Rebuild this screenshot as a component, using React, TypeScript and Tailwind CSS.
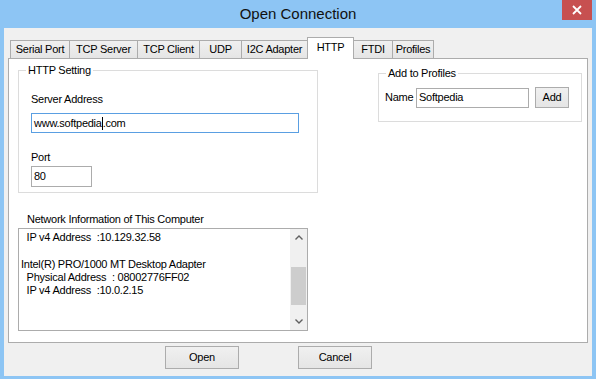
import React from 'react';

const tabs = [
  { label: 'Serial Port', w: 'w-[60px]' },
  { label: 'TCP Server', w: 'w-[69px]' },
  { label: 'TCP Client', w: 'w-[63px]' },
  { label: 'UDP', w: 'w-[43px]' },
  { label: 'I2C Adapter', w: 'w-[67px]' },
  { label: 'HTTP', w: 'w-[47px]', active: true },
  { label: 'FTDI', w: 'w-[40px]' },
  { label: 'Profiles', w: 'w-[42px]' },
];

const netLines = [
  '  IP v4 Address  :10.129.32.58',
  '',
  'Intel(R) PRO/1000 MT Desktop Adapter',
  '  Physical Address  : 08002776FF02',
  '  IP v4 Address  :10.0.2.15',
];

function Chevron({ up }: { up?: boolean }) {
  return (
    <svg width="8" height="5" viewBox="0 0 8 5">
      <polyline
        points={up ? '0.5,4.5 4,1 7.5,4.5' : '0.5,0.5 4,4 7.5,0.5'}
        fill="none"
        stroke="#606060"
        strokeWidth="1.4"
      />
    </svg>
  );
}

function WinButton({ children, className }: { children: React.ReactNode; className?: string }) {
  return (
    <button
      type="button"
      className={`flex items-center justify-center border border-[#acacac] bg-gradient-to-b from-[#f0f0f0] to-[#e5e5e5] text-black ${className ?? ''}`}
    >
      {children}
    </button>
  );
}

export default function App() {
  return (
    <div className="flex h-[379px] w-[596px] flex-col bg-[#8dc5f4] font-['Liberation_Sans',Arial,sans-serif] text-[11px] tracking-[-0.25px] text-black">
      {/* title bar */}
      <div className="relative flex h-[28px] shrink-0 items-center justify-center">
        <span className="text-[15px] tracking-normal text-[#111]">Open Connection</span>
        <div className="absolute right-[4px] top-0 flex h-[20px] w-[30px] items-center justify-center bg-[#c75050]">
          <svg width="10" height="10" viewBox="0 0 10 10">
            <path d="M1 1 L9 9 M9 1 L1 9" stroke="white" strokeWidth="1.8" />
          </svg>
        </div>
      </div>

      {/* client area */}
      <div className="mx-[4px] mb-[3px] flex flex-1 flex-col bg-[#f0f0f0]">
        {/* tab strip */}
        <div className="mt-[9px] flex h-[21px] items-end pl-[6px]">
          {tabs.map((t, i) =>
            t.active ? (
              <div
                key={t.label}
                className={`relative z-10 -mb-px -ml-px flex h-[22px] items-center justify-center border border-b-0 border-[#acacac] bg-white pb-[3px] ${t.w}`}
              >
                {t.label}
              </div>
            ) : (
              <div
                key={t.label}
                className={`flex h-[18px] items-center justify-center border border-b-0 border-[#acacac] bg-gradient-to-b from-[#f0f0f0] to-[#e5e5e5] ${i > 0 ? '-ml-px' : ''} ${t.w}`}
              >
                {t.label}
              </div>
            )
          )}
        </div>

        {/* tab page */}
        <div className="ml-[4px] flex h-[285px] w-[580px] flex-col border border-[#acacac] bg-white">
          <div className="flex items-start">
            {/* HTTP Setting */}
            <fieldset className="ml-[9px] mt-[5px] h-[129px] w-[300px] border border-[#dcdcdc]">
              <legend className="ml-[7px] px-[2px] leading-[13px]">HTTP Setting</legend>
              <div className="flex flex-col items-start px-[12px]">
                <span className="mt-[16px] leading-[13px]">Server Address</span>
                <div className="mt-[7px] flex h-[20px] w-[268px] items-center border border-[#5a9fe2] pl-[2px]">
                  <span>www.softpedia</span>
                  <span className="inline-block h-[13px] w-px bg-black" />
                  <span>.com</span>
                </div>
                <span className="mt-[18px] leading-[13px]">Port</span>
                <div className="mt-[2px] flex h-[21px] w-[61px] items-center border border-[#acacac] pl-[2px]">
                  80
                </div>
              </div>
            </fieldset>

            {/* Add to Profiles */}
            <fieldset className="ml-[60px] mt-[8px] h-[55px] w-[204px] border border-[#dcdcdc]">
              <legend className="ml-[7px] px-[2px] leading-[13px]">Add to Profiles</legend>
              <div className="flex items-center pl-[6px] pt-[7px]">
                <span className="w-[31px]">Name</span>
                <div className="flex h-[20px] w-[113px] items-center border border-[#acacac] pl-[2px]">
                  Softpedia
                </div>
                <WinButton className="ml-[6px] h-[21px] w-[34px]">Add</WinButton>
              </div>
            </fieldset>
          </div>

          {/* network info */}
          <span className="ml-[18px] mt-[20px] leading-[13px]">Network Information of This Computer</span>
          <div className="ml-[9px] mt-[2px] flex h-[103px] w-[290px] border border-[#acacac]">
            <div className="flex flex-1 flex-col pl-[2px] pt-[2px]">
              {netLines.map((l, i) => (
                <div key={i} className="h-[13.3px] whitespace-pre leading-[13px]">
                  {l}
                </div>
              ))}
            </div>
            <div className="flex w-[17px] flex-col bg-[#f0f0f0]">
              <div className="flex h-[17px] items-center justify-center">
                <Chevron up />
              </div>
              <div className="flex flex-1 flex-col px-px">
                <div className="h-[21px]" />
                <div className="h-[38px] bg-[#cdcdcd]" />
              </div>
              <div className="flex h-[17px] items-center justify-center">
                <Chevron />
              </div>
            </div>
          </div>
        </div>

        {/* bottom buttons */}
        <div className="mt-[3px] flex">
          <WinButton className="ml-[161px] h-[23px] w-[74px]">Open</WinButton>
          <WinButton className="ml-[59px] h-[23px] w-[74px]">Cancel</WinButton>
        </div>
      </div>
    </div>
  );
}
